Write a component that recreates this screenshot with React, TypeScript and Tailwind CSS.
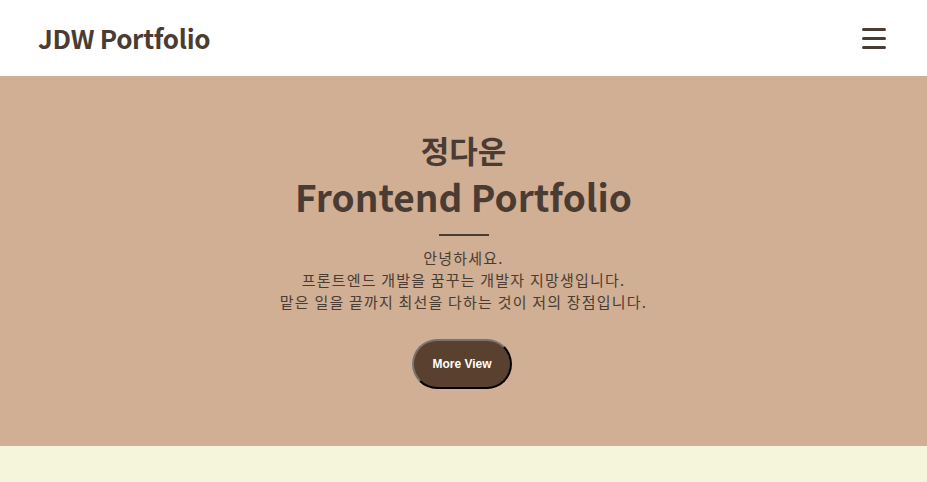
const App = () => {
  return (
    <div className="w-full min-h-[482px] bg-[#f5f5dc] font-['Noto_Sans_CJK_KR','Noto_Sans',sans-serif] text-[#4a3c33]">
      <header className="h-[76px] bg-white flex items-center justify-between pl-[38px] pr-[41px]">
        <h1 className="text-[26px] font-bold leading-none tracking-[-0.3px]">JDW Portfolio</h1>
        <button className="w-[24px] flex flex-col gap-[6px]" aria-label="menu">
          <span className="block h-[3px] w-full rounded-full bg-[#4a3c33]"></span>
          <span className="block h-[3px] w-full rounded-full bg-[#4a3c33]"></span>
          <span className="block h-[3px] w-full rounded-full bg-[#4a3c33]"></span>
        </button>
      </header>

      <section className="h-[370px] bg-[#d0af94] flex flex-col items-center">
        <h2 className="mt-[55px] text-[31px] font-bold leading-[38px]">정다운</h2>
        <h1 className="mt-[4px] text-[37px] font-semibold leading-[46px]">Frontend Portfolio</h1>
        <div className="mt-[15px] h-[2px] w-[50px] bg-[#4a3c33]"></div>
        <p className="mt-[11px] text-center text-[15px] leading-[22px] tracking-[1.2px]">
          안녕하세요.
          <br />
          프론트엔드 개발을 꿈꾸는 개발자 지망생입니다.
          <br />
          맡은 일을 끝까지 최선을 다하는 것이 저의 장점입니다.
        </p>
        <button className="mt-[26px] mr-[3px] h-[50px] w-[100px] rounded-full bg-[#5a402e] border-2 border-t-[#7a7470] border-l-[#7a7470] border-r-black border-b-black text-white text-[12px] font-bold font-['Liberation_Sans',sans-serif]">
          More View
        </button>
      </section>

      <section className="h-[36px] bg-[#f5f5dc]"></section>
    </div>
  );
};

export default App;
